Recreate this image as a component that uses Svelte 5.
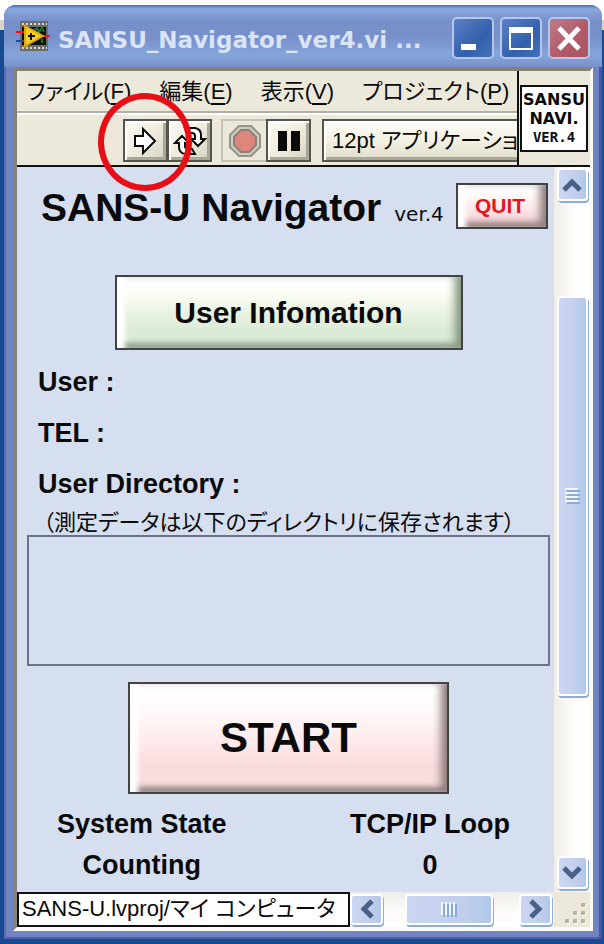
<script>
  let title = "SANSU_Navigator_ver4.vi ...";
  let user = "";
  let tel = "";
  let directory = "";
  let systemState = "Counting";
  let loopCount = 0;

  const menus = [
    { label: "ファイル", key: "F" },
    { label: "編集", key: "E" },
    { label: "表示", key: "V" },
    { label: "プロジェクト", key: "P" },
  ];
</script>

<div class="desktop">
  <main class="window">
    <header class="titlebar">
      <svg class="app-icon" width="34" height="30" viewBox="0 0 34 30">
        <rect x="4" y="0" width="28" height="30" fill="#6c6d69" />
        <path d="M6 3H31M6 27H31" stroke="#d8d8d4" stroke-width="2" stroke-dasharray="2 2" />
        <rect x="6" y="6" width="24" height="18" fill="#0b0f0c" />
        <path d="M18 10l3-3 2 4 3-4 2 4M26 18v4" stroke="#157a35" stroke-width="2" fill="none" />
        <path d="M0 11H9M25 15H34" stroke="#e8161b" stroke-width="2" />
        <path d="M0 20H9" stroke="#1e4fa8" stroke-width="2" />
        <path d="M9 5L27 15L9 25Z" fill="#f5d21f" stroke="#d9a71a" stroke-width="2" />
        <path d="M12 15H19M15 12V19" stroke="#111" stroke-width="2" />
      </svg>
      <h1>{title}</h1>
      <div class="controls">
        <button aria-label="最小化">
          <svg width="38" height="38" viewBox="0 0 38 38"><rect x="7" y="25" width="15" height="6" fill="#fff" /></svg>
        </button>
        <button aria-label="最大化">
          <svg width="38" height="38" viewBox="0 0 38 38">
            <path d="M8 9H30V30H8Z" fill="none" stroke="#fff" stroke-width="2" />
            <rect x="7" y="8" width="24" height="6" fill="#fff" />
          </svg>
        </button>
        <button class="close" aria-label="閉じる">
          <svg width="38" height="38" viewBox="0 0 38 38"><path d="M9 9L29 30M29 9L9 30" stroke="#fff" stroke-width="5" /></svg>
        </button>
      </div>
    </header>

    <div class="client">
      <div class="bars">
        <div class="bars-left">
          <nav class="menubar">
            {#each menus as menu}
              <button>{menu.label}(<u>{menu.key}</u>)</button>
            {/each}
          </nav>
          <div class="toolbar">
            <div class="run">
              <button class="tool" aria-label="実行">
                <svg width="26" height="30" viewBox="0 0 26 30">
                  <path d="M2 10H10V3L22 15L10 27V20H2Z" fill="#fff" stroke="#0b0b0b" stroke-width="2" />
                </svg>
              </button>
              <span class="marker"></span>
            </div>
            <button class="tool" aria-label="連続実行">
              <svg width="34" height="30" viewBox="0 0 34 30" fill="#fff" stroke="#0b0b0b" stroke-width="2">
                <path d="M12 2H22Q28 3 28 9V13H32L25 20L18 13H22V10Q22 7 19 7H15Z" />
                <path d="M22 28H12Q6 27 6 21V17H2L9 10L16 17H12V20Q12 23 15 23H19Z" />
              </svg>
            </button>
            <button class="tool stop" aria-label="中断" disabled>
              <svg width="34" height="34" viewBox="0 0 34 34">
                <path d="M11 2H23L32 11V23L23 32H11L2 23V11Z" fill="#cfccbd" stroke="#96948a" stroke-width="2" />
                <path d="M13 6H21L28 13V21L21 28H13L6 21V13Z" fill="#de857c" stroke="#8b7f78" stroke-width="2" />
              </svg>
            </button>
            <button class="tool" aria-label="一時停止">
              <svg width="22" height="22" viewBox="0 0 22 22"><path d="M0 1H9V21H0ZM13 1H22V21H13Z" fill="#0b0b0b" /></svg>
            </button>
            <select aria-label="フォント">
              <option>12pt アプリケーションフォント</option>
            </select>
          </div>
        </div>
        <div class="pane">
          <div class="vi-icon">
            <b>SANSU</b>
            <b>NAVI.</b>
            <span>VER.4</span>
          </div>
        </div>
      </div>

      <div class="middle">
        <section class="panel">
          <div class="heading">
            <h2>SANS-U Navigator</h2>
            <span class="version">ver.4</span>
            <button class="bevel pink quit">QUIT</button>
          </div>
          <button class="bevel green info">User Infomation</button>
          <p class="field">User : {user}</p>
          <p class="field">TEL : {tel}</p>
          <label class="field" for="directory">User Directory :</label>
          <p class="note">（測定データは以下のディレクトリに保存されます）</p>
          <textarea id="directory" readonly value={directory}></textarea>
          <button class="bevel pink start">START</button>
          <div class="status">
            <div>System State<br /><output>{systemState}</output></div>
            <div>TCP/IP Loop<br /><output>{loopCount}</output></div>
          </div>
        </section>
        <div class="scroll vertical">
          <button aria-label="上へ">
            <svg width="20" height="14" viewBox="0 0 20 14"><path d="M2 12L10 4L18 12" fill="none" stroke="#4a6187" stroke-width="5" /></svg>
          </button>
          <div class="space-before"></div>
          <div class="thumb">
            <svg width="15" height="17" viewBox="0 0 15 17">
              <path d="M0 1H13M0 5H13M0 9H13M0 13H13" stroke="#f3f7fe" stroke-width="2" />
              <path d="M2 3H15M2 7H15M2 11H15M2 15H15" stroke="#89a9df" stroke-width="2" />
            </svg>
          </div>
          <div class="space-after"></div>
          <button aria-label="下へ">
            <svg width="20" height="14" viewBox="0 0 20 14"><path d="M2 2L10 10L18 2" fill="none" stroke="#4a6187" stroke-width="5" /></svg>
          </button>
        </div>
      </div>

      <footer class="bottom">
        <div class="path">SANS-U.lvproj/マイ コンピュータ</div>
        <div class="scroll horizontal">
          <button aria-label="左へ">
            <svg width="14" height="20" viewBox="0 0 14 20"><path d="M12 2L4 10L12 18" fill="none" stroke="#4a6187" stroke-width="5" /></svg>
          </button>
          <div class="space-before"></div>
          <div class="thumb">
            <svg width="17" height="15" viewBox="0 0 17 15">
              <path d="M1 0V13M5 0V13M9 0V13M13 0V13" stroke="#f3f7fe" stroke-width="2" />
              <path d="M3 2V15M7 2V15M11 2V15M15 2V15" stroke="#89a9df" stroke-width="2" />
            </svg>
          </div>
          <div class="space-after"></div>
          <button aria-label="右へ">
            <svg width="14" height="20" viewBox="0 0 14 20"><path d="M2 2L10 10L2 18" fill="none" stroke="#4a6187" stroke-width="5" /></svg>
          </button>
        </div>
        <div class="grip">
          <svg width="24" height="24" viewBox="0 0 24 24">
            <path d="M19 3h4v4h-4zM19 11h4v4h-4zM11 11h4v4h-4zM19 19h4v4h-4zM11 19h4v4h-4zM3 19h4v4h-4z" fill="#fff" />
            <path d="M18 2h4v4h-4zM18 10h4v4h-4zM10 10h4v4h-4zM18 18h4v4h-4zM10 18h4v4h-4zM2 18h4v4h-4z" fill="#b9b4a0" />
          </svg>
        </div>
      </footer>
    </div>
  </main>
</div>

<style>
  :global(body) {
    margin: 0;
  }
  .desktop {
    box-sizing: border-box;
    min-height: 100vh;
    padding: 5px 2px 5px 4px;
    display: flex;
    background: linear-gradient(#fff 20px, #d9d5c8 20px, #d9d5c8 30px, #174a91 30px);
    font-family: "Liberation Sans", "Noto Sans CJK JP", sans-serif;
    color: #0a0a0a;
  }
  button, select, textarea {
    box-sizing: border-box;
    font: inherit;
    color: inherit;
    margin: 0;
    padding: 0;
    border-radius: 0;
  }
  h1, h2, p {
    margin: 0;
  }
  svg {
    display: block;
    flex: none;
  }

  .window {
    flex: 1;
    min-width: 0;
    box-sizing: border-box;
    display: flex;
    flex-direction: column;
    padding: 0 9px 8px;
    background: #6f84c0;
    border-radius: 12px 12px 0 0;
    box-shadow: inset 2px 0 #5967b0, inset -3px 0 #4a55a3, inset 0 -2px #4f5fae;
  }

  .titlebar {
    display: flex;
    align-items: center;
    height: 62px;
    margin: 0 -9px;
    padding: 8px 12px 0;
    box-sizing: border-box;
    border-radius: 12px 12px 0 0;
    background: linear-gradient(#4571c4, #8aa8de 4px, #7890ca 16px, #7890ca 32px, #85a5da 50px, #7a8fcb 62px);
  }
  .titlebar h1 {
    flex: 1;
    min-width: 0;
    margin-left: 8px;
    font: bold 23px/30px "DejaVu Sans", sans-serif;
    white-space: nowrap;
    overflow: hidden;
    color: #dbe4f5;
  }
  .app-icon {
    margin-bottom: 8px;
  }
  .controls {
    display: flex;
    gap: 6px;
    margin-bottom: 4px;
  }
  .controls button {
    width: 42px;
    height: 42px;
    border: 2px solid #b5c7ec;
    border-radius: 5px;
    background: linear-gradient(135deg, #5c80c6, #3460ab 60%, #4172bd);
  }
  .controls .close {
    background: linear-gradient(135deg, #bf7a86, #b05a69 60%, #a95563);
  }

  .client {
    flex: 1;
    display: flex;
    flex-direction: column;
    background: #ece9db;
    border: solid;
    border-width: 4px 3px 4px 4px;
    border-color: #85827a #fbfaf5 #fbfaf5 #85827a;
  }
  .bars {
    display: flex;
    border-bottom: 2px solid #111;
  }
  .bars-left {
    flex: 1;
    min-width: 0;
  }
  .menubar {
    display: flex;
    gap: 28px;
    height: 42px;
    padding-left: 10px;
    overflow: hidden;
    box-sizing: border-box;
    border-bottom: 2px solid #b3b0a4;
  }
  .menubar button {
    border: 0;
    background: none;
    font-size: 22px;
    line-height: 42px;
    font-feature-settings: "palt";
    white-space: nowrap;
  }
  .menubar u {
    text-underline-offset: 4px;
    text-decoration-thickness: 2px;
  }
  .toolbar {
    display: flex;
    padding: 4px 0 3px 106px;
    border-top: 2px solid #fff;
  }
  .run {
    position: relative;
  }
  /* red ring around the run arrow */
  .marker {
    position: absolute;
    left: -25px;
    top: -26px;
    width: 82px;
    height: 86px;
    border: 6px solid #e60f17;
    border-radius: 50%;
    pointer-events: none;
    z-index: 2;
  }
  .tool {
    width: 45px;
    height: 43px;
    display: flex;
    align-items: center;
    justify-content: center;
    border: 2px solid #54554d;
    background: linear-gradient(135deg, #fdfcf7, #ece8d8 60%, #d5d1c0);
    box-shadow: inset 2px 2px #fff, inset -3px -3px #aaa798;
  }
  .run + .tool {
    margin-left: -1px;
  }
  .stop {
    margin-left: 9px;
    border-color: #c5c2b4;
    border-right: 0;
    background: #ebe8da;
    box-shadow: none;
  }
  select {
    flex: 1;
    min-width: 0;
    margin-left: 11px;
    height: 43px;
    padding-left: 8px;
    appearance: none;
    border: 2px solid #54554d;
    border-right: 0;
    background: linear-gradient(#fffef9, #f4f1e2 50%, #e0dccb);
    box-shadow: inset 2px 2px #fff, inset 0 -3px #aaa798;
    font-size: 22px;
    font-feature-settings: "palt";
    text-overflow: clip;
    overflow: hidden;
  }
  .pane {
    display: flex;
    align-items: center;
    padding-right: 2px;
    border-left: 2px solid #111;
  }
  .vi-icon {
    width: 68px;
    height: 67px;
    box-sizing: border-box;
    margin-left: 1px;
    padding-top: 3px;
    border: 2px solid #111;
    background: #fff;
    display: flex;
    flex-direction: column;
    align-items: center;
    font: 14px/19px "DejaVu Sans Mono", monospace;
  }
  .vi-icon b {
    font: bold 16px/19px "DejaVu Sans", sans-serif;
  }
  .vi-icon span {
    font-weight: bold;
  }

  .middle {
    flex: 1;
    display: flex;
  }
  .panel {
    flex: 1;
    min-width: 0;
    display: flex;
    flex-direction: column;
    padding: 16px 4px 6px 10px;
    background: #d5dff0;
    font-size: 27px;
    font-weight: bold;
  }
  .heading {
    display: flex;
    align-items: baseline;
    padding: 0 2px 0 14px;
  }
  .heading h2 {
    font-size: 39px;
    line-height: 50px;
    white-space: nowrap;
  }
  .version {
    margin-left: 13px;
    font: 20px/24px "DejaVu Sans", sans-serif;
  }
  .bevel {
    border: 2px solid #424345;
  }
  .green {
    background: linear-gradient(#fff 8%, #fbfdf4 24%, #e9f2e2 52%, #d9ead6 78%, #e6f0de);
    box-shadow: inset 10px 0 5px -2px #fff, inset -9px 0 8px -3px #84977f, inset 0 -7px 6px -2px #8b9d88, inset 0 8px 4px -1px #fff;
  }
  .pink {
    background: linear-gradient(#fff 8%, #fff9f8 26%, #fdeaeb 52%, #f9dadd 78%, #fae2e3);
    box-shadow: inset 10px 0 5px -2px #fff, inset -9px 0 8px -3px #8f7c7c, inset 0 -7px 6px -2px #947d7d, inset 0 8px 4px -1px #fff;
  }
  .quit {
    width: 92px;
    height: 46px;
    margin-left: auto;
    align-self: flex-start;
    padding-right: 4px;
    font-size: 21px;
    color: #e8141b;
  }
  .info {
    width: 348px;
    height: 75px;
    margin: 42px auto 7px;
    align-self: center;
    font-size: 30px;
  }
  .field {
    padding-left: 11px;
    line-height: 51px;
  }
  .note {
    padding-left: 16px;
    font-size: 22px;
    font-weight: normal;
    line-height: 25px;
    font-feature-settings: "palt";
    white-space: nowrap;
  }
  textarea {
    flex: 1;
    min-height: 131px;
    border: 2px solid #6c7289;
    background: transparent;
    resize: none;
    outline: 0;
  }
  .start {
    width: 321px;
    height: 112px;
    margin: 16px auto 10px;
    align-self: center;
    font-size: 42px;
  }
  .status {
    display: flex;
    justify-content: space-between;
    padding: 0 40px 0 30px;
    line-height: 41px;
    text-align: center;
  }

  .scroll {
    display: flex;
    align-items: center;
    box-sizing: border-box;
  }
  .scroll button, .thumb {
    box-sizing: border-box;
    display: flex;
    align-items: center;
    justify-content: center;
    border: 2px solid #fff;
    border-radius: 4px;
    background: linear-gradient(90deg, #cbd6f2, #c2cfeb 60%, #b1c8ea);
    box-shadow: 1px 2px #8facdb;
  }
  .space-before, .space-after {
    flex: 96 0 0;
  }
  .space-after {
    flex-grow: 161;
  }
  .thumb {
    flex: 400 0 0;
  }
  .vertical {
    flex-direction: column;
    width: 36px;
    padding: 1px 2px 3px;
    background: linear-gradient(90deg, #efede6, #fdfafa 50%, #fff);
  }
  .vertical button {
    width: 31px;
    height: 33px;
  }
  .vertical .thumb {
    width: 31px;
  }
  .horizontal {
    flex: 1;
    padding: 1px 2px 2px 0;
    background: linear-gradient(#efede6, #fdfafa 50%, #fff);
  }
  .horizontal button {
    width: 33px;
    height: 31px;
  }
  .horizontal .thumb {
    height: 31px;
    flex-grow: 86;
  }
  .horizontal .space-before {
    flex-grow: 23;
  }
  .horizontal .space-after {
    flex-grow: 27;
  }
  .bottom {
    display: flex;
    height: 35px;
  }
  .path {
    box-sizing: border-box;
    width: 333px;
    padding-left: 3px;
    border: 2px solid #111;
    background: #fff;
    font-size: 22px;
    line-height: 30px;
    font-feature-settings: "palt";
    white-space: nowrap;
    overflow: hidden;
  }
  .grip {
    display: flex;
    align-items: flex-end;
    justify-content: flex-end;
    width: 36px;
    box-sizing: border-box;
    padding: 0 3px 2px 0;
  }
</style>
